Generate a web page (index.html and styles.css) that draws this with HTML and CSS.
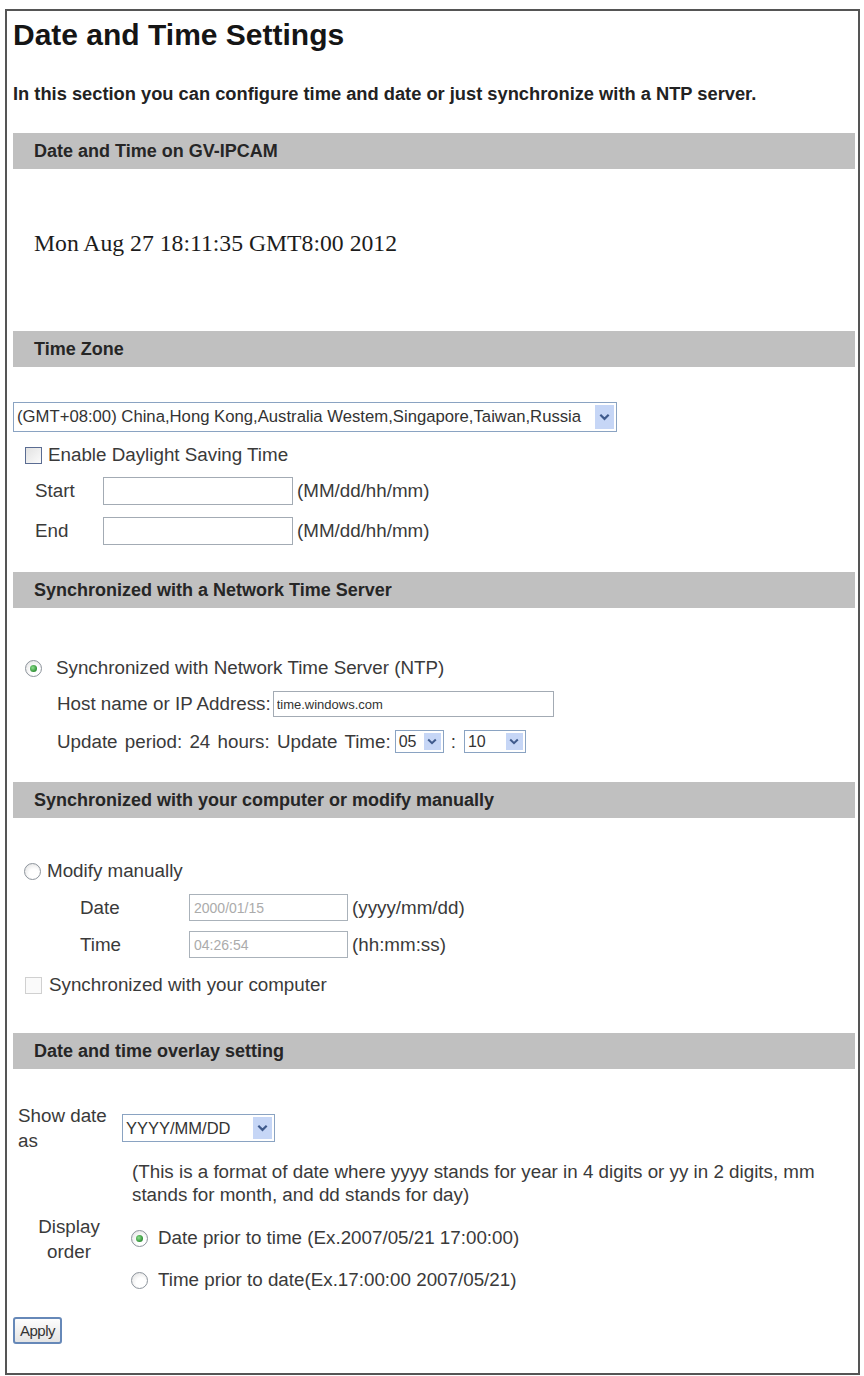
FILE: index.html
```html
<!DOCTYPE html>
<html lang="en">
<head>
  <meta charset="UTF-8">
  <meta name="viewport" content="width=device-width, initial-scale=1.0">
  <title>Date and Time Settings</title>
  <link rel="stylesheet" href="styles.css">
</head>
<body>
  <div class="page">
    <h1>Date and Time Settings</h1>
    <p class="intro">In this section you can configure time and date or just synchronize with a NTP server.</p>

    <!-- current camera clock -->
    <div class="bar">Date and Time on GV-IPCAM</div>
    <div class="clock">Mon Aug 27 18:11:35 GMT8:00 2012</div>

    <!-- time zone -->
    <div class="bar">Time Zone</div>
    <div class="section tz-section">
      <div class="select select-tz">
        <span class="select-text">(GMT+08:00) China,Hong Kong,Australia Westem,Singapore,Taiwan,Russia</span>
        <span class="drop"><svg viewBox="0 0 10 7" width="11" height="8"><path d="M1.2 1.5 L5 5.2 L8.8 1.5" fill="none" stroke="#3f5a8c" stroke-width="2"/></svg></span>
      </div>
      <div class="check-row">
        <span class="check"></span>
        <span>Enable Daylight Saving Time</span>
      </div>
      <div class="field-row dst-row">
        <span class="field-label">Start</span>
        <input class="text-box dst-box" type="text">
        <span class="hint">(MM/dd/hh/mm)</span>
      </div>
      <div class="field-row dst-row end-row">
        <span class="field-label">End</span>
        <input class="text-box dst-box" type="text">
        <span class="hint">(MM/dd/hh/mm)</span>
      </div>
    </div>

    <!-- ntp -->
    <div class="bar">Synchronized with a Network Time Server</div>
    <div class="section ntp-section">
      <div class="radio-row ntp-radio">
        <span class="radio checked"></span>
        <span>Synchronized with Network Time Server (NTP)</span>
      </div>
      <div class="field-row host-row">
        <span>Host name or IP Address:</span>
        <input class="text-box host-box" type="text" value="time.windows.com">
      </div>
      <div class="field-row update-row">
        <span class="update-text">Update period: 24 hours: Update Time:</span>
        <div class="select select-small hour">
          <span class="select-text">05</span>
          <span class="drop"><svg viewBox="0 0 10 7" width="10" height="7"><path d="M1.2 1.5 L5 5.2 L8.8 1.5" fill="none" stroke="#3f5a8c" stroke-width="2"/></svg></span>
        </div>
        <span class="colon">:</span>
        <div class="select select-small minute">
          <span class="select-text">10</span>
          <span class="drop"><svg viewBox="0 0 10 7" width="10" height="7"><path d="M1.2 1.5 L5 5.2 L8.8 1.5" fill="none" stroke="#3f5a8c" stroke-width="2"/></svg></span>
        </div>
      </div>
    </div>

    <!-- manual -->
    <div class="bar">Synchronized with your computer or modify manually</div>
    <div class="section manual-section">
      <div class="radio-row manual-radio">
        <span class="radio"></span>
        <span>Modify manually</span>
      </div>
      <div class="field-row manual-row">
        <span class="field-label">Date</span>
        <input class="text-box manual-box" type="text" value="2000/01/15" disabled>
        <span class="hint">(yyyy/mm/dd)</span>
      </div>
      <div class="field-row manual-row time-row">
        <span class="field-label">Time</span>
        <input class="text-box manual-box" type="text" value="04:26:54" disabled>
        <span class="hint">(hh:mm:ss)</span>
      </div>
      <div class="check-row pc-row">
        <span class="check disabled"></span>
        <span>Synchronized with your computer</span>
      </div>
    </div>

    <!-- overlay -->
    <div class="bar">Date and time overlay setting</div>
    <div class="section overlay-section">
      <div class="show-row">
        <span class="show-label">Show date<br>as</span>
        <div class="select select-format">
          <span class="select-text">YYYY/MM/DD</span>
          <span class="drop"><svg viewBox="0 0 10 7" width="11" height="8"><path d="M1.2 1.5 L5 5.2 L8.8 1.5" fill="none" stroke="#3f5a8c" stroke-width="2"/></svg></span>
        </div>
      </div>
      <p class="note">(This is a format of date where yyyy stands for year in 4 digits or yy in 2 digits, mm<br>stands for month, and dd stands for day)</p>
      <div class="order-row">
        <span class="order-label">Display<br>order</span>
        <div class="order-options">
          <div class="radio-row">
            <span class="radio checked"></span>
            <span>Date prior to time (Ex.2007/05/21 17:00:00)</span>
          </div>
          <div class="radio-row second">
            <span class="radio"></span>
            <span>Time prior to date(Ex.17:00:00 2007/05/21)</span>
          </div>
        </div>
      </div>
      <button class="apply" type="button">Apply</button>
    </div>
  </div>
</body>
</html>
```

FILE: styles.css
```css
body {
  margin: 0;
  background: #fff;
  font-family: "Liberation Sans", Arial, sans-serif;
  font-size: 18.8px;
  color: #3a3a3a;
}

.page {
  box-sizing: border-box;
  width: 855px;
  margin: 9px 0 0 5px;
  padding: 6px 3px 29px 6px;
  border: 2px solid #555;
}

h1 {
  margin: 0;
  font-size: 30px;
  line-height: 36px;
  color: #151515;
}

.intro {
  margin: 29px 0 27px;
  font-size: 18.3px;
  line-height: 24px;
  font-weight: bold;
  color: #222;
}

.bar {
  height: 36px;
  line-height: 36px;
  padding-left: 21px;
  background: #c0c0c0;
  font-size: 18px;
  font-weight: bold;
  color: #262626;
}

.clock {
  padding: 59px 0 73px 21px;
  font-family: "Liberation Serif", "Times New Roman", serif;
  font-size: 23.7px;
  line-height: 30px;
  color: #1c1c1c;
}

/* fake form controls */
.select {
  box-sizing: border-box;
  display: flex;
  align-items: center;
  justify-content: space-between;
  border: 1px solid #8aa3c2;
  background: #fff;
  color: #333;
}

.select-text {
  padding-left: 3px;
  white-space: nowrap;
}

.drop {
  display: flex;
  align-items: center;
  justify-content: center;
  width: 19px;
  align-self: stretch;
  margin: 2px;
  background: #c6d6f6;
}

.select-tz {
  width: 604px;
  height: 30px;
  margin-top: 35px;
  font-size: 16.7px;
}

.select-small {
  height: 23px;
  font-size: 16px;
}

.select-small .drop {
  width: 17px;
}

.hour {
  width: 49px;
  margin-left: 4px;
}

.minute {
  width: 62px;
}

.colon {
  margin: 0 8px 0 7px;
}

.select-format {
  width: 153px;
  height: 28px;
  margin-top: 11px;
  font-size: 16.5px;
}

.check-row,
.radio-row {
  display: flex;
  align-items: center;
  height: 24px;
}

.check {
  box-sizing: border-box;
  width: 17px;
  height: 17px;
  margin: 0 6px 0 12px;
  border: 1px solid #5a6c92;
  background: linear-gradient(135deg, #e2e2e2, #fbfbfb);
}

.check.disabled {
  border-color: #d0d0d0;
  background: #fafafa;
}

.radio {
  position: relative;
  box-sizing: border-box;
  width: 17px;
  height: 17px;
  border: 1px solid #8d949c;
  border-radius: 50%;
  background: radial-gradient(circle at 60% 65%, #fff 35%, #dcdcdc);
}

.radio.checked::after {
  content: "";
  position: absolute;
  left: 4px;
  top: 4px;
  width: 7px;
  height: 7px;
  border-radius: 50%;
  background: radial-gradient(circle at 40% 40%, #8de08d, #2f8f35 70%);
}

.tz-section .check-row {
  margin-top: 11px;
}

.field-row {
  display: flex;
  align-items: center;
}

.field-label {
  box-sizing: border-box;
  padding-left: 22px;
}

.text-box {
  box-sizing: border-box;
  margin: 0;
  border: 1px solid #a3abb4;
  background: #fff;
  font-family: "Liberation Sans", Arial, sans-serif;
  color: #333;
}

.hint {
  margin-left: 4px;
}

.dst-row {
  height: 28px;
  margin-top: 10px;
}

.dst-row .field-label {
  width: 90px;
}

.dst-box {
  width: 190px;
  height: 28px;
}

.end-row {
  margin-top: 12px;
}

.tz-section {
  padding-bottom: 27px;
}

/* ntp block */
.ntp-section {
  padding: 48px 0 29px;
}

.ntp-radio .radio {
  margin: 0 14px 0 12px;
}

.host-row {
  height: 26px;
  margin-top: 11px;
  padding-left: 44px;
}

.host-box {
  width: 281px;
  height: 26px;
  margin-left: 2px;
  padding: 0 3px;
  font-size: 13px;
}

.update-row {
  height: 23px;
  margin-top: 13px;
  padding-left: 44px;
}

.update-text {
  word-spacing: 2px;
}

/* manual block */
.manual-section {
  padding: 41px 0 36px;
}

.manual-radio .radio {
  margin: 0 6px 0 11px;
}

.manual-row {
  height: 27px;
  margin-top: 11px;
}

.manual-row .field-label {
  width: 176px;
  padding-left: 67px;
}

.manual-box {
  width: 159px;
  height: 27px;
  padding: 0 4px;
  font-size: 14px;
}

.manual-box:disabled {
  color: #ababab;
  background: #fff;
  border-color: #aab2ba;
}

.time-row {
  margin-top: 10px;
}

.pc-row {
  margin-top: 15px;
}

.pc-row .check {
  margin-right: 7px;
}

/* overlay block */
.overlay-section {
  padding-top: 34px;
}

.show-row {
  display: flex;
  align-items: flex-start;
}

.show-label {
  box-sizing: border-box;
  width: 109px;
  padding-left: 5px;
  line-height: 25px;
}

.note {
  margin: 7px 0 0;
  padding-left: 119px;
  line-height: 23px;
}

.order-row {
  display: flex;
  align-items: flex-start;
  margin-top: 8px;
}

.order-label {
  width: 112px;
  text-align: center;
  line-height: 25px;
}

.order-options {
  padding: 12px 0 0 6px;
}

.order-options .radio {
  margin-right: 10px;
}

.order-options .second {
  margin-top: 18px;
}

.apply {
  display: block;
  width: 49px;
  height: 27px;
  margin-top: 25px;
  padding: 0;
  border: 2px solid #6688b8;
  border-radius: 3px;
  background: linear-gradient(#fdfdfd, #e4e4e4);
  font-family: "Liberation Sans", Arial, sans-serif;
  font-size: 15px;
  color: #333;
  letter-spacing: -0.5px;
}
```
